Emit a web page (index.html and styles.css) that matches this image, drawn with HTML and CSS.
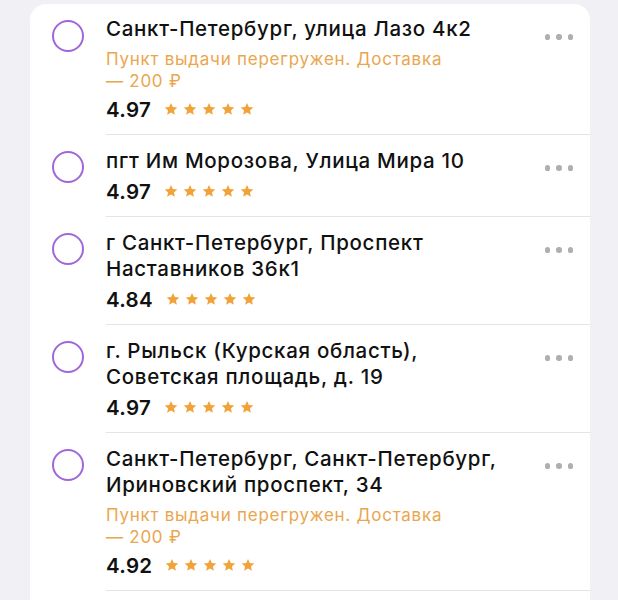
FILE: index.html
```html
<!DOCTYPE html>
<html lang="ru">
<head>
<meta charset="utf-8">
<link rel="stylesheet" href="styles.css">
</head>
<body>
<svg width="0" height="0" class="defs">
  <defs>
    <symbol id="star" viewBox="0 0 24 24">
      <path d="M12 1.5l3.1 7.1 7.7.7-5.8 5.1 1.7 7.6L12 18l-6.7 4 1.7-7.6-5.8-5.1 7.7-.7z"/>
    </symbol>
  </defs>
</svg>
<div class="card">
  <div class="item">
    <span class="radio"></span>
    <div class="info">
      <div class="title">Санкт-Петербург, улица Лазо 4к2</div>
      <div class="note">Пункт выдачи перегружен. Доставка —&nbsp;200&nbsp;₽</div>
      <div class="rating"><span class="score">4.97</span><span class="stars"><svg><use href="#star"/></svg><svg><use href="#star"/></svg><svg><use href="#star"/></svg><svg><use href="#star"/></svg><svg><use href="#star"/></svg></span></div>
    </div>
    <span class="more"><i></i><i></i><i></i></span>
  </div>
  <div class="item">
    <span class="radio"></span>
    <div class="info">
      <div class="title">пгт Им Морозова, Улица Мира 10</div>
      <div class="rating"><span class="score">4.97</span><span class="stars"><svg><use href="#star"/></svg><svg><use href="#star"/></svg><svg><use href="#star"/></svg><svg><use href="#star"/></svg><svg><use href="#star"/></svg></span></div>
    </div>
    <span class="more"><i></i><i></i><i></i></span>
  </div>
  <div class="item">
    <span class="radio"></span>
    <div class="info">
      <div class="title">г Санкт-Петербург, Проспект Наставников 36к1</div>
      <div class="rating"><span class="score">4.84</span><span class="stars"><svg><use href="#star"/></svg><svg><use href="#star"/></svg><svg><use href="#star"/></svg><svg><use href="#star"/></svg><svg><use href="#star"/></svg></span></div>
    </div>
    <span class="more"><i></i><i></i><i></i></span>
  </div>
  <div class="item">
    <span class="radio"></span>
    <div class="info">
      <div class="title">г. Рыльск (Курская область), Советская площадь, д.&nbsp;19</div>
      <div class="rating"><span class="score">4.97</span><span class="stars"><svg><use href="#star"/></svg><svg><use href="#star"/></svg><svg><use href="#star"/></svg><svg><use href="#star"/></svg><svg><use href="#star"/></svg></span></div>
    </div>
    <span class="more"><i></i><i></i><i></i></span>
  </div>
  <div class="item">
    <span class="radio"></span>
    <div class="info">
      <div class="title">Санкт-Петербург, Санкт-Петербург, Ириновский проспект, 34</div>
      <div class="note">Пункт выдачи перегружен. Доставка —&nbsp;200&nbsp;₽</div>
      <div class="rating"><span class="score">4.92</span><span class="stars"><svg><use href="#star"/></svg><svg><use href="#star"/></svg><svg><use href="#star"/></svg><svg><use href="#star"/></svg><svg><use href="#star"/></svg></span></div>
    </div>
    <span class="more"><i></i><i></i><i></i></span>
  </div>
</div>
</body>
</html>
```

FILE: styles.css
```css
html, body {
  margin: 0;
  padding: 0;
  background: #f1f1f5;
  font-family: Inter, "Noto Sans", "DejaVu Sans", sans-serif;
  color: #111;
}
body {
  padding: 4px 28px 0 30px;
  height: 600px;
  box-sizing: border-box;
  overflow: hidden;
}
.defs { position: absolute; }
.card {
  background: #fff;
  border-radius: 16px 16px 0 0;
  width: 560px;
  min-height: 620px;
}
.item {
  display: flex;
  align-items: flex-start;
  padding: 0 0 0 22px;
}
.radio {
  flex: none;
  width: 32px;
  height: 32px;
  box-sizing: border-box;
  border: 2px solid #a066dc;
  border-radius: 50%;
  margin-top: 16px;
  margin-right: 22px;
}
.info {
  flex: 1;
  padding: 13px 0 12px;
  border-bottom: 1px solid #e4e4e8;
}
.item:first-child .info { padding-top: 12px; }
.title, .note {
  max-width: 400px;
}
.title {
  font-size: 20.5px;
  line-height: 26px;
  font-weight: 500;
  letter-spacing: 0.7px;
}
.note {
  font-size: 17px;
  line-height: 22px;
  letter-spacing: 0.75px;
  color: #eaa64e;
  margin: 6px 0 2px;
}
.rating {
  display: flex;
  align-items: center;
  height: 26px;
  margin-top: 4px;
}
.score {
  font-size: 20.5px;
  font-weight: 600;
  letter-spacing: 0.3px;
  margin-right: 13px;
}
.stars {
  display: flex;
  gap: 5px;
}
.stars svg {
  width: 14px;
  height: 14px;
  fill: #f1a33a;
}
.more {
  display: flex;
  gap: 6px;
}
.item .more {
  flex: none;
  width: 28px;
  margin: 30px 17px 0 -45px;
}
.more i {
  width: 5.5px;
  height: 5.5px;
  border-radius: 50%;
  background: #aeaeb3;
}
```
